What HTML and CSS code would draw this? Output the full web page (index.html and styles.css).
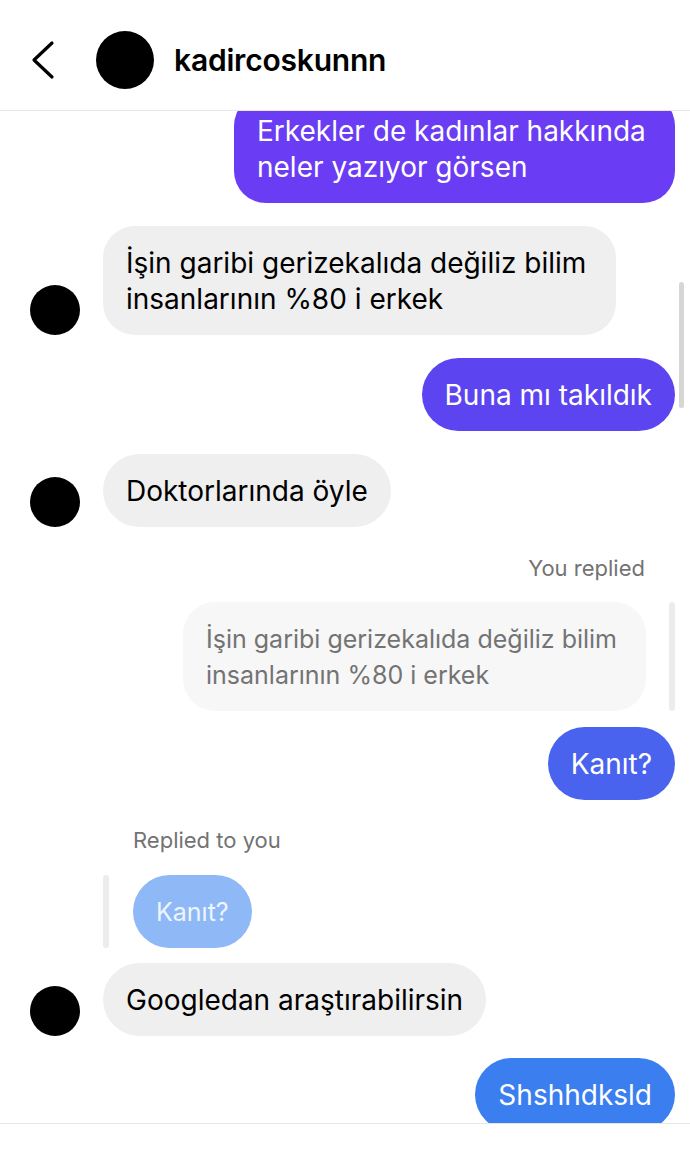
FILE: index.html
```html
<!DOCTYPE html>
<html lang="tr">
<head>
  <meta charset="UTF-8">
  <meta name="viewport" content="width=device-width, initial-scale=1">
  <title>kadircoskunnn</title>
  <link rel="stylesheet" href="styles.css">
</head>
<body>
  <div class="screen">
    <header class="top-bar">
      <button class="back" aria-label="Geri">
        <svg width="24" height="40" viewBox="0 0 24 40">
          <polyline points="21,3 3,20 21,37" fill="none" stroke="#000" stroke-width="3.2" stroke-linecap="round" stroke-linejoin="round"/>
        </svg>
      </button>
      <div class="avatar avatar-big"></div>
      <span class="username">kadircoskunnn</span>
    </header>

    <main class="thread">
      <div class="row sent first">
        <div class="bubble c1 multi">Erkekler de kadınlar hakkında neler yazıyor görsen</div>
      </div>

      <div class="row received">
        <div class="avatar"></div>
        <div class="bubble gray multi">İşin garibi gerizekalıda değiliz bilim insanlarının %80 i erkek</div>
      </div>

      <div class="row sent">
        <div class="bubble c2">Buna mı takıldık</div>
      </div>

      <div class="row received">
        <div class="avatar"></div>
        <div class="bubble gray">Doktorlarında öyle</div>
      </div>

      <div class="reply-label label-right">You replied</div>
      <div class="quote-row quote-right">
        <div class="bubble quoted multi">İşin garibi gerizekalıda değiliz bilim insanlarının %80 i erkek</div>
        <span class="quote-bar"></span>
      </div>
      <div class="row sent after-quote">
        <div class="bubble c3">Kanıt?</div>
      </div>

      <div class="reply-label label-left">Replied to you</div>
      <div class="quote-row quote-left">
        <span class="quote-bar"></span>
        <div class="bubble faded">Kanıt?</div>
      </div>
      <div class="row received after-quote-left">
        <div class="avatar"></div>
        <div class="bubble gray">Googledan araştırabilirsin</div>
      </div>

      <div class="row sent last">
        <div class="bubble c4">Shshhdksld</div>
      </div>
    </main>

    <div class="scrollbar"></div>
    <footer class="bottom-bar"></footer>
  </div>
</body>
</html>
```

FILE: styles.css
```css
* {
  box-sizing: border-box;
}
body {
  margin: 0;
  background: #fff;
  font-family: "Inter", "Roboto", sans-serif;
  color: #000;
}
.screen {
  position: relative;
  width: 690px;
  height: 1155px;
  display: flex;
  flex-direction: column;
  overflow: hidden;
}
.top-bar {
  height: 111px;
  flex-shrink: 0;
  display: flex;
  align-items: center;
  border-bottom: 1px solid #e6e6e6;
  padding-left: 31px;
  padding-top: 10px;
}
.back {
  background: none;
  border: none;
  padding: 0;
  width: 24px;
  height: 40px;
  display: flex;
}
.avatar {
  width: 50px;
  height: 50px;
  border-radius: 50%;
  background: #000;
  flex-shrink: 0;
}
.avatar-big {
  width: 58px;
  height: 58px;
  margin-left: 41px;
}
.username {
  margin-left: 20px;
  font-size: 30px;
  font-weight: 600;
  letter-spacing: -0.2px;
}
.thread {
  flex: 1;
  overflow: hidden;
  display: flex;
  flex-direction: column;
  padding: 0 15px 0 30px;
}
.row {
  display: flex;
  align-items: flex-end;
  margin-top: 23px;
}
.row.first {
  margin-top: -17px;
}
.row.sent {
  justify-content: flex-end;
}
.row.received .avatar {
  margin-right: 23px;
}
.bubble {
  font-size: 28px;
  line-height: 36px;
  padding: 18.5px 23px;
  border-radius: 37px;
  color: #fff;
  max-width: 441px;
}
.bubble.multi {
  border-radius: 32px;
}
.bubble.gray {
  background: #efefef;
  color: #000;
  max-width: 513px;
}
.c1 { background: #6a3cf3; }
.c2 { background: #5c45f1; }
.c3 { background: #4a63ee; }
.c4 { background: #3b7ef0; }

.reply-label {
  font-size: 22px;
  line-height: 24px;
  color: #737373;
  margin-top: 29px;
}
.label-right {
  align-self: flex-end;
  margin-right: 30px;
}
.label-left {
  margin-left: 103px;
  margin-top: 28px;
}
.quote-row {
  display: flex;
  align-items: stretch;
  margin-top: 22px;
}
.quote-right {
  justify-content: flex-end;
}
.quote-left {
  margin-left: 73px;
  margin-top: 23px;
}
.quote-bar {
  width: 6px;
  border-radius: 3px;
  background: #ececec;
  flex-shrink: 0;
}
.quote-right .quote-bar {
  margin-left: 23px;
}
.quote-left .quote-bar {
  margin-right: 24px;
}
.bubble.quoted {
  background: #f7f7f7;
  color: #737373;
  font-size: 25px;
  max-width: 463px;
}
.bubble.faded {
  background: #8eb9f6;
  color: #eef5ff;
  font-size: 25px;
}
.after-quote {
  margin-top: 16px;
}
.after-quote-left {
  margin-top: 15px;
}
.row.last {
  margin-top: 22px;
}
.scrollbar {
  position: absolute;
  left: 679px;
  top: 282px;
  width: 5px;
  height: 126px;
  border-radius: 3px;
  background: #d6d6d6;
}
.bottom-bar {
  height: 32px;
  flex-shrink: 0;
  border-top: 1px solid #e6e6e6;
  background: #fff;
}
```
